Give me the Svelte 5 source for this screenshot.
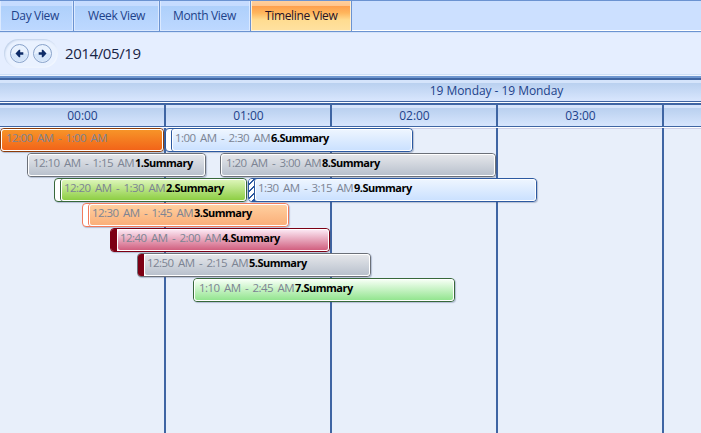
<script>
  const tabs = [
    { label: 'Day View', width: 74, pad: 11 },
    { label: 'Week View', width: 86, pad: 14 },
    { label: 'Month View', width: 91, pad: 13 },
    { label: 'Timeline View', width: 101, pad: 14, active: true }
  ];
  const hours = ['00:00', '01:00', '02:00', '03:00', ''];
  const events = [
    { row: 0, x: 0, w: 164, time: '12:00 AM - 1:00 AM', kind: 'orange', strip: 0 },
    { row: 0, x: 165, w: 248, time: '1:00 AM - 2:30 AM', title: '6.Summary', kind: 'blue', strip: 6, status: 'free' },
    { row: 1, x: 27, w: 179, time: '12:10 AM - 1:15 AM', title: '1.Summary', kind: 'gray', strip: 0 },
    { row: 1, x: 220, w: 276, time: '1:20 AM - 3:00 AM', title: '8.Summary', kind: 'gray', strip: 0 },
    { row: 2, x: 54, w: 193, time: '12:20 AM - 1:30 AM', title: '2.Summary', kind: 'green', strip: 6, status: 'free' },
    { row: 2, x: 248, w: 289, time: '1:30 AM - 3:15 AM', title: '9.Summary', kind: 'blue', strip: 6, status: 'tentative' },
    { row: 3, x: 82, w: 207, time: '12:30 AM - 1:45 AM', title: '3.Summary', kind: 'peach', strip: 6, status: 'free' },
    { row: 4, x: 110, w: 220, time: '12:40 AM - 2:00 AM', title: '4.Summary', kind: 'rose', strip: 6, status: 'away' },
    { row: 5, x: 137, w: 234, time: '12:50 AM - 2:15 AM', title: '5.Summary', kind: 'gray', strip: 6, status: 'away' },
    { row: 6, x: 193, w: 262, time: '1:10 AM - 2:45 AM', title: '7.Summary', kind: 'mint', strip: 0 }
  ];
</script>

<div class="scheduler">
  <nav class="tabs">
    {#each tabs as tab}
      <div class="tab" class:active={tab.active} style="width:{tab.width}px;padding-left:{tab.pad}px">{tab.label}</div>
    {/each}
  </nav>

  <div class="toolbar">
    <div class="arrows">
      {#each [false, true] as next}
        <svg width="19" height="19" viewBox="0 0 19 19">
          <circle cx="9.5" cy="9.5" r="9" fill="#e9f2fe" stroke="#87a1c9" />
          <path d="M1.5 9.5a8 8 0 0 0 16 0z" fill="#d4e5fa" />
          <path transform={next ? 'translate(19 0) scale(-1 1)' : ''} d="M5.5 9.5L9 5.7h1.2V8.3H13.3v2.4H10.2v2.6H9z" fill="#0d2b67" />
        </svg>
      {/each}
    </div>
    <span class="date">2014/05/19</span>
  </div>

  <div class="range"><span>19 Monday - 19 Monday</span></div>
  <div class="hours">
    {#each hours as hour}<div class="hour"><span>{hour}</span></div>{/each}
  </div>

  <div class="body">
    <div class="grid">
      {#each hours as _}<div class="column"></div>{/each}
    </div>
    {#each events as e}
      <div class="event {e.kind}" style="left:{e.x}px;top:{e.row * 25}px;width:{e.w}px">
        {#if e.strip}<div class="strip {e.status}" style="width:{e.strip}px"></div>{/if}
        <div class="card" class:joined={e.strip}>
          <span class="time" class:long={e.time.length > 17}>{e.time}</span><b>{e.title ?? ''}</b>
        </div>
      </div>
    {/each}
  </div>
</div>

<style>
  :global(body) { margin: 0; overflow: hidden; }
  .scheduler, .scheduler * { box-sizing: border-box; }
  .scheduler {
    width: 701px; height: 433px; overflow: hidden;
    display: flex; flex-direction: column;
    background: #e8effa; color: #1d428a;
    font: 12px/16px "Open Sans", "Noto Sans", sans-serif;
    white-space: nowrap;
  }
  .tabs {
    flex: none; height: 32px; display: flex;
    background: linear-gradient(#cce0ff 0 29px, #fff 29px);
    border-top: 1px solid #6b93d1; border-bottom: 1px solid #6b93d1;
  }
  .tab {
    height: 30px; padding-top: 7px; letter-spacing: -.35px;
    border-right: 1px solid #6b93d1;
    box-shadow: inset 1px 0 #dbe9ff, inset -1px 0 #dbe9ff, inset 0 -1px #dbe9ff;
    background: linear-gradient(#c6dcff 0 5px, #aed0fb 5px, #bdd8ff 29px);
  }
  .tab.active {
    color: #261126;
    background: linear-gradient(#ffcf9c 0, #ffc58c 5px, #fd9f4d 5px, #ffb65d 12px, #ffdc91 19px, #ffe1a0 29px);
    box-shadow: inset 1px 0 #ffefd2, inset -1px 0 #ffefd2, inset 0 -1px #fff5e0;
  }
  .toolbar {
    flex: none; height: 48px; display: flex; align-items: center;
    padding: 0 0 4px 4px; background: #e5eeff;
    border-bottom: 2px solid #3f65a3;
    box-shadow: inset 0 1px #d2e2fa, inset 0 -2px #6f97d0, inset 0 -3px #eef4ff, inset 0 -4px #cddff7;
  }
  .arrows {
    width: 54px; height: 29px; border-radius: 15px; display: flex; gap: 4px;
    padding: 5px 0 0 6px; background: #eaf2ff;
    box-shadow: inset 1px 1px 2px #becfe8, inset -1px -1px 1px #f2f7ff;
  }
  .date { margin: 0 0 0 7px; font-size: 15px; letter-spacing: -.4px; color: #172445; }
  .range {
    flex: none; height: 25px; text-align: center;
    padding: 3px 0 0 292px;
    background: linear-gradient(#d5e4fb 0 3px, #b9d0ef 3px, #d7e5fd 20px);
    border-bottom: 2px solid #3f65a3;
    box-shadow: inset 0 -1px #fff, inset 0 -2px #3f65a3;
  }
  .range span { letter-spacing: -.05px; }
  .hours { flex: none; height: 23px; display: flex; border-bottom: 1px solid #fff; }
  .hour {
    flex: none; width: 166px; padding: 3px 0 0 1px; text-align: center; letter-spacing: -.05px;
    background: linear-gradient(#d5e4fb 0 3px, #b9d0ef 3px, #d7e5fd 21px);
    border-right: 2px solid #3f65a3; border-bottom: 1px solid #3f65a3;
  }
  .body { flex: 1; position: relative; }
  .grid { height: 100%; display: flex; box-shadow: inset 0 1px #cfcfe8; }
  .column { flex: none; width: 166px; border-right: 2px solid #3f65a3; }
  .event {
    position: absolute; height: 24px; display: flex;
    border: 1px solid var(--edge); border-radius: 4px; background: #fff;
    box-shadow: 1px 1px 1px rgba(70, 90, 130, .32);
  }
  .strip { flex: none; border-radius: 3px 0 0 3px; }
  .tentative { background: repeating-linear-gradient(135deg, #fff 0 3.2px, #2c59a0 3.2px 4.8px); }
  .away { background: #7d0014; }
  .card {
    flex: 1; display: flex; padding: 0 0 0 4px; overflow: hidden;
    border: 1px solid #fff; border-radius: 3px; background: var(--fill);
  }
  .card.joined { padding-left: 2px; box-shadow: -1px 0 var(--edge); }
  .away + .card.joined { box-shadow: none; }
  .time { width: 96px; color: #7c8493; font-size: 11.5px; letter-spacing: -.55px; word-spacing: 2px; flex: none; }
  .time.long { width: 102px; }
  b { color: #000; font-size: 11px; letter-spacing: -.5px; }
  .orange { --edge: #8d3c09; --fill: linear-gradient(#f79428, #f26419); }
  .blue { --edge: #2c59a0; --fill: linear-gradient(#edf5ff, #cbe1ff); }
  .gray { --edge: #6b7078; --fill: linear-gradient(#e4e6ea, #b9c1cd); }
  .green { --edge: #37683a; --fill: linear-gradient(#dcf5b8, #8dce43); }
  .peach { --edge: #f27a5b; --fill: linear-gradient(#ffcf9f, #faaf79); }
  .rose { --edge: #7d0014; --fill: linear-gradient(#fbe6f2, #d15f7f); }
  .mint { --edge: #37683a; --fill: linear-gradient(#f4fff3, #93e58f); }
</style>
